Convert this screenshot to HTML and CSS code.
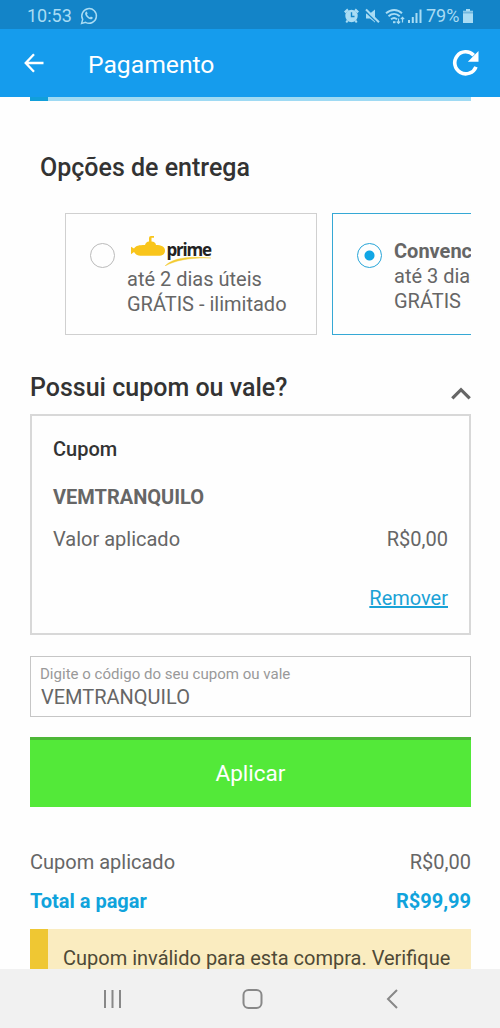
FILE: index.html
```html
<!DOCTYPE html>
<html lang="pt-BR">
<head>
<meta charset="utf-8">
<title>Pagamento</title>
<link rel="stylesheet" href="styles.css">
</head>
<body>
<div class="screen">
  <div class="status">
    <span class="clock">10:53</span>
    <svg class="whats" width="18" height="18" viewBox="0 0 18 18" fill="none" stroke="currentColor" stroke-width="1.5"><path d="M1.600 16.400l1.100-4A7.300 7.300 0 1 1 5.600 15.300z"/><path d="M5.500 5.200c.7-1 1.500-.6 1.700.2l.4 1.200-.6.9c.7 1.500 1.700 2.300 3 2.900l.9-.9 1.900.9c.1 1.300-1 2-2.200 1.800C7.800 11.700 5.200 9 5.100 6.500z" fill="currentColor" stroke="none"/></svg>
    <svg class="tray" width="82" height="20" viewBox="0 0 82 20">
      <g fill="none" stroke="currentColor">
        <circle cx="7.500" cy="10" r="6.200" fill="currentColor" stroke="none"/><path d="M.8 6.300 4 3.500M14.200 6.300 11 3.500" stroke-width="2.400"/><path d="M3.500 14.500 2.300 16.500M11.500 14.500l1.200 2" stroke-width="2"/><path d="M7.500 6.200v4.300h3" stroke="#1384c8" stroke-width="1.400"/>
      </g>
      <path d="M22 7.500h4l5-4v13l-5-4h-4z" fill="currentColor"/><path d="M20.500 4.500 34 17.500" stroke="#1384c8" stroke-width="1.500"/><path d="M22 3.500 35 16.300" stroke="currentColor" stroke-width="2"/>
      <g fill="none" stroke="currentColor">
        <path d="M42 7.300c5-4.400 11.500-4.400 16 0M44.500 10.300c3.500-3 8-3 11.200 0M47 13.200c2-1.600 4.200-1.600 6 0" stroke-width="1.900"/><path d="M49 16.200h2.500" stroke-width="2"/><path d="M54.500 17.500v-5m-1.700 3 1.700 1.800 1.700-1.800M58.500 11.500v5M56.800 13.200l1.700-1.800 1.700 1.800" stroke-width="1.200"/>
        <path d="M65 14v3M68.800 11v6M72.500 7v10M76.500 3.500V17" stroke-width="2"/>
      </g>
    </svg>
    <span class="percent">79%</span>
    <svg class="battery" width="10" height="14" viewBox="0 0 10 14"><path d="M3 0h4v1.700h3V14H0V1.700h3z" fill="currentColor"/><path d="M0 3.500h10" stroke="#70b7df" stroke-width="2"/></svg>
  </div>
  <header class="appbar">
    <svg class="back" width="20" height="20" viewBox="0 0 20 20" fill="none" stroke="#fff" stroke-width="2.300"><path d="M19.500 10H2M10 1.200 1.700 10l8.300 8.800"/></svg>
    <h1 class="title">Pagamento</h1>
    <svg class="reload" width="28" height="28" viewBox="0 0 28 28"><path d="M24 17.800A11 11 0 1 1 21.700 6.200" fill="none" stroke="#fff" stroke-width="3.600"/><path d="M26.500 2v10.700H15.800z" fill="#fff"/></svg>
  </header>
  <main class="content">
    <div class="progress"><div class="progress-fill"></div></div>
    <h2 class="heading delivery-heading">Opções de entrega</h2>
    <div class="options">
      <div class="option">
        <span class="radio"></span>
        <div class="option-text">
          <svg class="prime" width="86" height="30" viewBox="0 0 86 30"><path d="M4 12.500C6 9.500 9 9 15 9q1-3.500 4-3.500V2q0-2 2-2H24v1.700h-2.500V5.500q4 0 4.500 3.500C31 9 35 10.500 35 14.500s-3 5.300-7 5.300H12c-3 0-6-.5-8-3.800L1 18.300v-7.500z" fill="#f9c51b"/><text class="prime-word" x="36.500" y="19.500" textLength="45.500">prime</text><path d="M35 30C43 22 57 20 81 22 60 21.600 46 24 35 30z" fill="#f3cb32" stroke="#f3cb32" stroke-width=".4"/></svg>
          <p class="line">até 2 dias úteis</p>
          <p class="line">GRÁTIS - ilimitado</p>
        </div>
      </div>
      <div class="option selected">
        <span class="radio"></span>
        <div class="option-text">
          <p class="line strong">Convencional</p>
          <p class="line">até 3 dias úteis</p>
          <p class="line">GRÁTIS</p>
        </div>
      </div>
    </div>
    <div class="coupon-head">
      <h2 class="heading">Possui cupom ou vale?</h2>
      <svg class="chevron" width="20" height="13" viewBox="0 0 20 13"><path d="M1.300 11.300 10 2.700l8.700 8.600" fill="none" stroke="#666" stroke-width="3.300"/></svg>
    </div>
    <section class="coupon">
      <h3 class="coupon-title">Cupom</h3>
      <p class="coupon-code">VEMTRANQUILO</p>
      <div class="row"><span class="value-label">Valor aplicado</span><span>R$0,00</span></div>
      <div class="remove-row"><a class="remove">Remover</a></div>
    </section>
    <div class="field">
      <label class="field-label">Digite o código do seu cupom ou vale</label>
      <div class="field-value">VEMTRANQUILO</div>
    </div>
    <button class="apply">Aplicar</button>
    <div class="row summary"><span class="summary-label">Cupom aplicado</span><span>R$0,00</span></div>
    <div class="row total"><span class="total-label">Total a pagar</span><span>R$99,99</span></div>
    <div class="notice">Cupom inválido para esta compra. Verifique</div>
  </main>
  <nav class="nav">
    <svg width="300" height="24" viewBox="0 0 300 24" fill="none" stroke="#888" stroke-width="2"><path d="M5 3v18M12.500 3v18M20 3v18"/><rect x="143.500" y="3" width="18" height="18" rx="5"/><path d="M297 3l-9 9 9 9"/></svg>
  </nav>
</div>
</body>
</html>
```
FILE: styles.css
```css
* { box-sizing: border-box; }
body, h1, h2, h3, p { margin: 0; }
body { font-family: Roboto, sans-serif; font-size: 20px; color: #666; background: #fefefe; }
svg { display: block; flex: none; }
.screen { width: 500px; height: 1028px; display: flex; flex-direction: column; overflow: hidden; white-space: nowrap; }
.status { height: 29px; flex: none; display: flex; align-items: center; background: #1384c8; color: #a9dcf4; padding: 2px 27px 0 27px; font-size: 18px; }
.clock { width: 53px; }
.tray { margin-left: auto; }
.percent { width: 36px; }
.battery { margin-left: 1px; }
.appbar { height: 68px; flex: none; display: flex; align-items: center; background: #159ced; padding: 0 20px 0 24px; }
.title { color: #fff; font-size: 24.700px; font-weight: 400; line-height: 30px; margin: 3px 0 0 44px; }
.reload { margin-left: auto; }
.content { flex: 1; min-height: 0; overflow: hidden; padding: 0 29px 0 30px; }
.progress { height: 4px; background: #9fdaf3; }
.progress-fill { width: 18px; height: 4px; background: #119fda; }
.heading { color: #333; font-size: 25px; font-weight: 500; line-height: 30px; }
.delivery-heading { margin: 52px 0 30px 10px; }
.options { display: flex; gap: 15px; padding-left: 35px; overflow: hidden; }
.option { width: 252px; height: 122px; flex: none; display: flex; gap: 12px; border: 1.500px solid #d0d0d0; padding: 23px 0 0 24px; }
.radio { width: 25px; height: 25px; flex: none; margin-top: 6px; border: 1px solid #bbb; border-radius: 50%; }
.selected { border-color: #35a8d5; }
.selected .radio { border-color: #27a5d8; background: radial-gradient(circle, #11a6e5 0 4.500px, transparent 5.500px); }
.prime { margin: -1px 0 1px 3px; }
.prime-word { font: 700 17px "Open Sans", sans-serif; fill: #222; }
.line { line-height: 25px; }
.selected .option-text { padding-top: 2px; }
.strong, .coupon-code { font-weight: 700; }
.coupon-head { display: flex; justify-content: space-between; margin-top: 37px; height: 42px; }
.coupon-head .heading { padding-top: 1px; }
.chevron { margin-top: 15px; }
.coupon { height: 221px; border: 2px solid #d8d8d8; padding: 21px 21px; }
.coupon-title { color: #333; font-size: 20px; font-weight: 500; line-height: 24px; }
.coupon-code { line-height: 24px; margin-top: 24px; }
.row { display: flex; justify-content: space-between; line-height: 24px; }
.coupon .row { margin-top: 18px; }
.remove-row { display: flex; justify-content: flex-end; margin-top: 35px; line-height: 24px; }
.remove { color: #1ba2d6; text-decoration: underline; }
.field { height: 61px; margin-top: 21px; border: 1.500px solid #c6c6c6; padding: 7px 10px 0 9px; }
.field-label { display: block; color: #999; font-size: 15.050px; line-height: 20px; }
.field-value { line-height: 24px; margin: 1px 0 0 1px; }
.apply { display: block; width: 100%; height: 70px; margin-top: 20px; padding: 0 0 2px; border: 0; border-top: 3px solid #4db737; background: #53e939; color: #fff; font: 400 22.500px Roboto, sans-serif; }
.summary { margin-top: 43px; }
.total { color: #10a3dc; font-weight: 700; margin-top: 15px; }
.notice { height: 60px; margin-top: 16px; border-left: 18px solid #efc733; background: #faecc0; color: #4e4936; padding: 16px 0 0 15px; line-height: 26px; }
.nav { height: 59px; flex: none; display: flex; justify-content: center; align-items: center; background: #f1f1f1; }
```
